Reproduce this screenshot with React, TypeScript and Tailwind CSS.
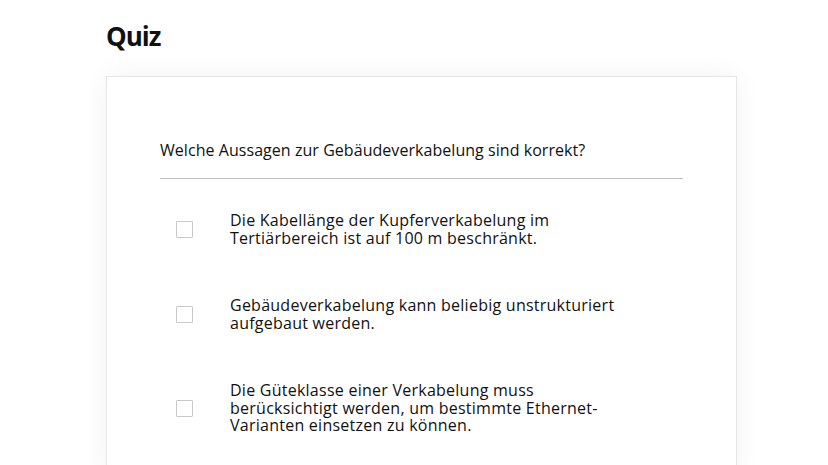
const options = [
  "Die Kabellänge der Kupferverkabelung im Tertiärbereich ist auf 100 m beschränkt.",
  "Gebäudeverkabelung kann beliebig unstrukturiert aufgebaut werden.",
  "Die Güteklasse einer Verkabelung muss berücksichtigt werden, um bestimmte Ethernet-Varianten einsetzen zu können.",
];

export default function App() {
  return (
    <div
      className="min-h-screen bg-white text-[#111] overflow-hidden"
      style={{ fontFamily: '"Open Sans", "Noto Sans", sans-serif' }}
    >
      <div className="w-[631px] ml-[106px] pt-[16px]">
        <h1 className="text-[26px] font-bold leading-[40px] tracking-[-1px] mb-[20px]">
          Quiz
        </h1>

        {/* Card */}
        <div className="border border-[#e6e6e6] bg-white shadow-[0_0_24px_rgba(0,0,0,0.06)] px-[53px] pt-[62px] pb-[40px]">
          <p className="text-[16px] leading-[22px] tracking-[0.05px] pb-[17px] border-b border-[#bdbdbd]">
            Welche Aussagen zur Gebäudeverkabelung sind korrekt?
          </p>

          <div className="flex flex-col gap-[50px] pt-[33px]">
            {options.map((opt, i) => (
              <label key={i} className="flex items-center">
                <span className="pl-[16px] pr-[37px] shrink-0">
                  <span className="w-[17px] h-[17px] border border-[#c8c8c8] bg-white block rounded-[1px]" />
                </span>
                <span className="w-[395px] text-[16px] leading-[17.5px] tracking-[0.25px]">
                  {opt}
                </span>
              </label>
            ))}
          </div>
        </div>
      </div>
    </div>
  );
}
